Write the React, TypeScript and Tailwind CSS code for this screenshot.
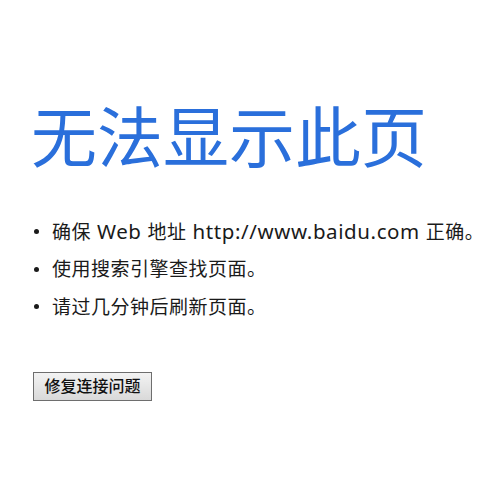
import React from 'react';

type Part = { text: string; latin?: boolean };

const tips: Part[][] = [
  [
    { text: '确保' },
    { text: ' Web ', latin: true },
    { text: '地址' },
    { text: ' http://www.baidu.com ', latin: true },
    { text: '正确。' },
  ],
  [{ text: '使用搜索引擎查找页面。' }],
  [{ text: '请过几分钟后刷新页面。' }],
];

export default function App() {
  return (
    <div
      className="w-[504px] h-[504px] bg-white pl-[33px] pt-[96px]"
      style={{ fontFamily: '"Noto Sans", "Noto Sans CJK SC", sans-serif' }}
    >
      <h1 className="-ml-[2px] text-[66px] leading-[80px] text-[#2a6fdb] font-normal">无法显示此页</h1>
      <ul className="mt-[37px] flex flex-col">
        {tips.map((parts, i) => (
          <li key={i} className="flex items-center h-[37.5px] text-[19px] tracking-[0.5px] text-[#1a1a1a] whitespace-pre">
            <span className="w-[5px] h-[5px] rounded-full bg-[#1a1a1a] ml-[1px] mr-[13px]" />
            {parts.map((p, j) =>
              p.latin ? (
                <span key={j} className="text-[20.5px] tracking-[0.6px]">
                  {p.text}
                </span>
              ) : (
                <span key={j}>{p.text}</span>
              )
            )}
          </li>
        ))}
      </ul>
      <button className="mt-[46px] w-[119px] h-[29px] border border-[#6e6e6e] bg-gradient-to-b from-[#f3f3f3] to-[#d9d9d9] text-[16px] text-[#111] font-medium leading-none">
        修复连接问题
      </button>
    </div>
  );
}
